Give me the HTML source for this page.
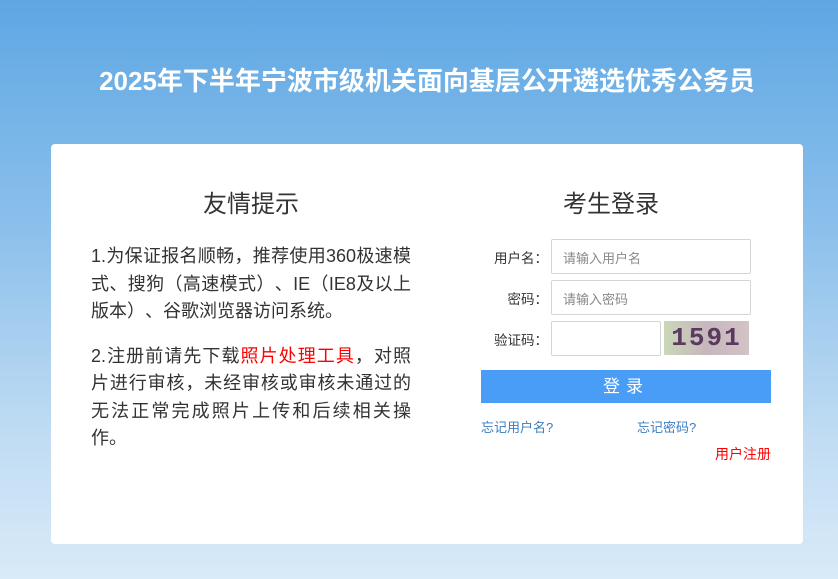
<!DOCTYPE html>
<html><head><meta charset="utf-8"><style>
*{margin:0;padding:0;box-sizing:border-box}
body{width:838px;height:579px;overflow:hidden;font-family:"Liberation Sans","Noto Sans CJK SC",sans-serif;background:linear-gradient(#5ea7e3 0%,#8cc0ec 40%,#c0dcf3 75%,#d9eaf8 100%);position:relative;text-spacing-trim:space-all}
.title{position:absolute;top:61px;left:0;width:838px;text-align:center;color:#fff;font-size:26px;font-weight:bold;padding-left:16px}
.card{position:absolute;left:51px;top:144px;width:752px;height:400px;background:#fff;border-radius:4px}
h2{font-weight:normal;font-size:24px;color:#333;position:absolute;top:40px;text-align:center}
.tips{position:absolute;left:40px;top:99px;width:320px;font-size:18px;line-height:27.5px;color:#333;white-space:nowrap}
.tips p{margin-bottom:17px}
.tips .j{display:block;text-align:justify;text-align-last:justify}
.red{color:#f00}
.lab{position:absolute;width:90px;text-align:right;font-size:13.5px;color:#333;left:407px}
.in{position:absolute;left:500px;width:200px;height:35px;border:1px solid #d5d5d5;border-radius:2px;font-size:13px;color:#888;padding:8px 0 0 11px}
.btn{position:absolute;left:430px;top:226px;width:290px;height:33px;background:#4a9df7;color:#fff;font-size:17px;text-align:center;line-height:33px;letter-spacing:6px}
.lk{position:absolute;top:273px;font-size:13px;color:#3a7dc0}
</style></head><body>
<div class="title">2025年下半年宁波市级机关面向基层公开遴选优秀公务员</div>
<div class="card">
<h2 style="left:100px;width:200px">友情提示</h2>
<div class="tips"><p><span class="j">1.为保证报名顺畅，推荐使用360极速模</span><span class="j">式、搜狗（高速模式）、IE（IE8及以上</span>版本）、谷歌浏览器访问系统。</p><p><span class="j">2.注册前请先下载<span class="red">照片处理工具</span>，对照</span><span class="j">片进行审核，未经审核或审核未通过的</span><span class="j">无法正常完成照片上传和后续相关操</span>作。</p></div>
<h2 style="left:460px;width:200px">考生登录</h2>
<div class="lab" style="top:103px">用户名：</div>
<div class="lab" style="top:144px">密码：</div>
<div class="lab" style="top:185px">验证码：</div>
<div class="in" style="top:95px">请输入用户名</div>
<div class="in" style="top:136px">请输入密码</div>
<div class="in" style="top:177px;width:110px"></div>
<div style="position:absolute;left:613px;top:177px;width:85px;height:34px;background:linear-gradient(90deg,#c9d8b8,#c8b6bd,#d2c3c6);font:bold 26px 'Liberation Mono',monospace;color:#5a3a5e;text-align:center;line-height:34px;letter-spacing:2px">1591</div>
<div class="btn">登录</div>
<div class="lk" style="left:430px">忘记用户名?</div>
<div class="lk" style="left:586px">忘记密码?</div>
<div style="position:absolute;right:32px;top:300px;font-size:14px;color:#f00">用户注册</div>
</div>
</body></html>
